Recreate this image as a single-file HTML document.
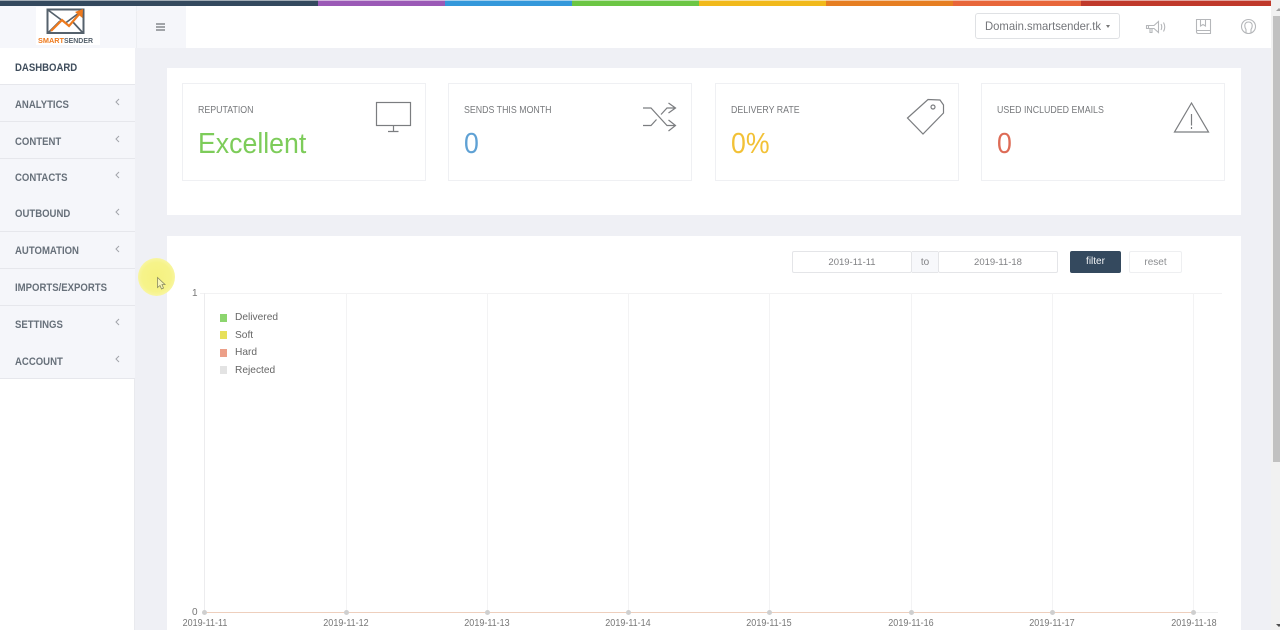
<!DOCTYPE html>
<html lang="en">
<head>
<meta charset="utf-8">
<title>SmartSender Dashboard</title>
<style>
html,body{margin:0;padding:0;width:1280px;height:630px;overflow:hidden;background:#eff0f5;font-family:"Liberation Sans",sans-serif;color:#666}
div,span{position:absolute;box-sizing:border-box;white-space:nowrap}
svg{position:absolute;overflow:visible}
.seg{top:0;height:6px}
.nav{left:0;width:135px;height:37px;background:#f5f6fa;border-bottom:1px solid #e6e7ec}
.nav span{left:15px;top:13px;font-size:11px;font-weight:bold;color:#67707a;line-height:14px;transform:scaleX(.87);transform-origin:0 50%}
.nav svg{left:115px;top:13px}
.nav path{fill:none;stroke:#a2a5aa}
.card{top:83px;width:244px;height:98px;background:#fff;border:1px solid #eff0f3}
.lbl{left:15px;top:20px;font-size:10.5px;line-height:13px;color:#77797c;transform:scaleX(.84);transform-origin:0 50%}
.val{left:15px;top:43px;font-size:29px;line-height:34px;font-weight:normal;opacity:.88;transform:scaleX(.92);transform-origin:0 50%}
.leg{left:235px;font-size:10.5px;line-height:13px;color:#666;transform:scaleX(.97);transform-origin:0 50%}
.sw{left:220px;width:7px;height:8px}
.grid{top:293px;width:1px;height:319px;background:#f3f3f4}
.dot{top:610px;width:5px;height:5px;border-radius:50%;background:#cfcfcf}
.xl{top:618px;width:70px;text-align:center;font-size:10px;line-height:12px;color:#777;transform:scaleX(.9)}
.inp{top:251px;width:120px;height:22px;background:#fff;border:1px solid #e4e5e8;border-radius:2px;text-align:center;font-size:9.500px;line-height:21px;color:#808184}
.ic{fill:none;stroke:#7b7d80;stroke-width:1.2}
.top{fill:none;stroke:#b5b7ba;stroke-width:1.100}
</style>
</head>
<body>
<div class="seg" style="left:0;width:318px;background:#34495e"></div>
<div class="seg" style="left:318px;width:127px;background:#9b59b6"></div>
<div class="seg" style="left:445px;width:127px;background:#3498db"></div>
<div class="seg" style="left:572px;width:127px;background:#6cc644"></div>
<div class="seg" style="left:699px;width:127px;background:#f1b91b"></div>
<div class="seg" style="left:826px;width:127px;background:#e67e22"></div>
<div class="seg" style="left:953px;width:128px;background:#e8663a"></div>
<div class="seg" style="left:1081px;width:190px;background:#c0392b"></div>
<div style="left:0;top:0;width:1271px;height:1px;background:rgba(255,255,255,.55)"></div>

<div style="left:0;top:6px;width:1271px;height:42px;background:#fff"></div>
<div style="left:0;top:6px;width:136px;height:42px;background:#f6f7fb"></div>
<div style="left:136px;top:6px;width:50px;height:42px;background:#f5f6fa;border-left:1px solid #eceef2"></div>

<div style="left:36px;top:7px;width:64px;height:38px;background:#fff"></div>
<svg style="left:36px;top:7px" width="64" height="38" viewBox="0 0 64 38">
  <rect x="11.500" y="2.500" width="36" height="23.500" fill="#fff" stroke="#55616c" stroke-width="2"/>
  <path d="M12 3L29.500 16L47 3M12 26L24 14M47 26L36 14" fill="none" stroke="#55616c" stroke-width="1.700"/>
  <path d="M15 24L26 13L33 19L45 5" fill="none" stroke="#ee7a1d" stroke-width="2.200"/>
  <path d="M47 2L46.500 11L39 5Z" fill="#ee7a1d"/>
  <text x="2" y="36" font-family="Liberation Sans" font-size="7.500" font-weight="bold" fill="#ee7a1d" textLength="26" lengthAdjust="spacingAndGlyphs">SMART</text>
  <text x="28" y="36" font-family="Liberation Sans" font-size="7.500" font-weight="bold" fill="#55616c" textLength="29" lengthAdjust="spacingAndGlyphs">SENDER</text>
</svg>

<svg style="left:156px;top:23px" width="9" height="8"><path d="M0 1H9M0 4H9M0 7H9" stroke="#6f7378" stroke-width="1.300"/></svg>

<div style="left:975px;top:13px;width:145px;height:26px;background:#fff;border:1px solid #dfe1e4;border-radius:3px"></div>
<span style="left:985px;top:19px;font-size:12px;line-height:14px;color:#74767a;transform:scaleX(.94);transform-origin:0 50%">Domain.smartsender.tk</span>
<div style="left:1106px;top:25px;width:0;height:0;border-left:2.500px solid transparent;border-right:2.500px solid transparent;border-top:3px solid #777"></div>

<svg style="left:1146px;top:20px" width="21" height="14" class="top">
  <path d="M0.500 5.500H2.500V8.500H0.500ZM2.500 5.500H8L12.500 1.500V12.500L8 8.500H2.500ZM4 9V12.500H6V9M15 4Q16.500 7 15 10M17.500 2.500Q20 7 17.500 11.500"/>
</svg>
<svg style="left:1196px;top:19px" width="15" height="15" class="top">
  <path d="M0.500 0.500H14.500V14.500H2Q0.500 14.500 0.500 12.500ZM0.500 11.500H14.500M4.500 0.500V7L7 5.500L9.500 7V0.500"/>
</svg>
<svg style="left:1241px;top:19px" width="15" height="15" class="top">
  <circle cx="7.500" cy="7.500" r="7"/><path d="M5 14V10.500Q3.800 9 3.800 6.800Q3.800 3 7.500 3T11.200 6.800Q11.200 9 10 10.500V14"/>
</svg>

<div style="left:1271px;top:0;width:9px;height:630px;background:#f1f1f1"></div>
<div style="left:1273px;top:16px;width:7px;height:446px;background:#c1c1c1"></div>
<div style="left:1276px;top:624px;width:0;height:0;border-left:3px solid transparent;border-right:3px solid transparent;border-top:3px solid #505050"></div>
<div style="left:1276px;top:8px;width:0;height:0;border-left:3px solid transparent;border-right:3px solid transparent;border-bottom:3px solid #a0a0a0"></div>

<div style="left:0;top:48px;width:135px;height:582px;background:#fff;border-right:1px solid #e9eaee"></div>
<div style="left:0;top:48px;width:135px;height:37px;background:#fff;border-bottom:1px solid #e6e7ec"><span style="left:15px;top:12.500px;font-size:11px;font-weight:bold;color:#3f4d5c;line-height:14px;transform:scaleX(.87);transform-origin:0 50%">DASHBOARD</span></div>

<div class="nav" style="top:85px"><span style="top:12.500px">ANALYTICS</span><svg width="5" height="8"><path d="M4 1L1 4L4 7"/></svg></div>
<div class="nav" style="top:122px"><span style="top:12.500px">CONTENT</span><svg width="5" height="8"><path d="M4 1L1 4L4 7"/></svg></div>
<div class="nav" style="top:159px"><span style="top:11.500px">CONTACTS</span><svg style="top:12px" width="5" height="8"><path d="M4 1L1 4L4 7"/></svg></div>
<div class="nav" style="top:195px"><span style="top:12px">OUTBOUND</span><svg width="5" height="8"><path d="M4 1L1 4L4 7"/></svg></div>
<div class="nav" style="top:232px"><span style="top:12px">AUTOMATION</span><svg width="5" height="8"><path d="M4 1L1 4L4 7"/></svg></div>
<div class="nav" style="top:269px"><span style="top:12px">IMPORTS/EXPORTS</span></div>
<div class="nav" style="top:306px"><span style="top:12px">SETTINGS</span><svg style="top:12px" width="5" height="8"><path d="M4 1L1 4L4 7"/></svg></div>
<div class="nav" style="top:342px"><span style="top:12.500px">ACCOUNT</span><svg width="5" height="8"><path d="M4 1L1 4L4 7"/></svg></div>

<div style="left:167px;top:68px;width:1074px;height:147px;background:#fff"></div>

<div class="card" style="left:182px"><div class="lbl">REPUTATION</div><div class="val" style="color:#6cc644">Excellent</div></div>
<div class="card" style="left:448px"><div class="lbl">SENDS THIS MONTH</div><div class="val" style="color:#4a95cf">0</div></div>
<div class="card" style="left:715px"><div class="lbl">DELIVERY RATE</div><div class="val" style="color:#f1b91b">0%</div></div>
<div class="card" style="left:981px"><div class="lbl">USED INCLUDED EMAILS</div><div class="val" style="color:#d9573f">0</div></div>

<svg style="left:376px;top:102px" width="35" height="31" class="ic">
  <rect x="0.500" y="0.500" width="34" height="23"/><path d="M17.500 24V29.500M12 29.500H22.500"/>
</svg>
<svg style="left:643px;top:102px" width="34" height="30" class="ic">
  <path d="M0 6H8L24 23.500H32.500M0 23.500H8L13.500 17.500M18 12.500L24 6H32.500M25.500 1L32.500 6L25.500 11M25.500 18L32.500 23.500L25.500 29"/>
</svg>
<svg style="left:907px;top:99px" width="37" height="36" class="ic">
  <path d="M0.500 19L21 0.500L33 1L36.500 6V14L16 35Z"/><circle cx="26" cy="8" r="2"/>
</svg>
<svg style="left:1174px;top:102px" width="35" height="31" class="ic">
  <path d="M17.500 1L34.500 30H0.500Z"/><path d="M17.500 12V23.500M17.500 25V27"/>
</svg>

<div style="left:167px;top:236px;width:1074px;height:394px;background:#fff"></div>

<div class="inp" style="left:792px">2019-11-11</div>
<div style="left:912px;top:251px;width:26px;height:22px;background:#f7f8fb;border-top:1px solid #e4e5e8;border-bottom:1px solid #e4e5e8;text-align:center;font-size:10px;line-height:21px;color:#808184">to</div>
<div class="inp" style="left:938px">2019-11-18</div>
<div style="left:1070px;top:251px;width:51px;height:22px;background:#34495e;border-radius:2px;text-align:center;font-size:10px;line-height:22px;color:#f2f4f6">filter</div>
<div style="left:1129px;top:251px;width:53px;height:22px;background:#fff;border:1px solid #eeeff1;border-radius:2px;text-align:center;font-size:10px;line-height:21px;color:#8b8d90">reset</div>

<div style="left:200px;top:293px;width:1022px;height:1px;background:#f2f2f3"></div>
<div class="grid" style="left:204px;background:#ececee"></div>
<div class="grid" style="left:346px"></div>
<div class="grid" style="left:487px"></div>
<div class="grid" style="left:628px"></div>
<div class="grid" style="left:769px"></div>
<div class="grid" style="left:911px"></div>
<div class="grid" style="left:1052px"></div>
<div class="grid" style="left:1193px"></div>
<div style="left:1193px;top:612px;width:25px;height:1px;background:#efefef"></div>
<div style="left:204px;top:612px;width:989px;height:1px;background:#eecfbd"></div>

<span style="left:192px;top:288px;font-size:10px;line-height:12px;color:#777">1</span>
<span style="left:192px;top:607px;font-size:10px;line-height:12px;color:#777">0</span>

<div class="dot" style="left:202px"></div>
<div class="dot" style="left:344px"></div>
<div class="dot" style="left:485px"></div>
<div class="dot" style="left:626px"></div>
<div class="dot" style="left:767px"></div>
<div class="dot" style="left:909px"></div>
<div class="dot" style="left:1050px"></div>
<div class="dot" style="left:1191px"></div>

<div class="xl" style="left:170px">2019-11-11</div>
<div class="xl" style="left:311px">2019-11-12</div>
<div class="xl" style="left:452px">2019-11-13</div>
<div class="xl" style="left:593px">2019-11-14</div>
<div class="xl" style="left:734px">2019-11-15</div>
<div class="xl" style="left:876px">2019-11-16</div>
<div class="xl" style="left:1017px">2019-11-17</div>
<div class="xl" style="left:1159px">2019-11-18</div>

<div class="sw" style="top:314px;background:#8cd56e"></div>
<div class="sw" style="top:331px;background:#e7e05a"></div>
<div class="sw" style="top:349px;background:#ec9f88"></div>
<div class="sw" style="top:366px;background:#e3e3e3"></div>
<span class="leg" style="top:311px">Delivered</span>
<span class="leg" style="top:329px">Soft</span>
<span class="leg" style="top:346px">Hard</span>
<span class="leg" style="top:364px">Rejected</span>

<div style="left:138px;top:258px;width:37px;height:38px;border-radius:50%;background:radial-gradient(circle,#f5f280 0%,#f6f38a 55%,#f9f7ae 80%,rgba(250,249,200,.35) 100%)"></div>
<svg style="left:157px;top:277px" width="9" height="13"><path d="M0.500 0.500V10.500L3 8.500L4.500 12L6.500 11L5 7.500H8Z" fill="#f6f5b8" stroke="#8a8a60" stroke-width=".8"/></svg>
</body>
</html>
